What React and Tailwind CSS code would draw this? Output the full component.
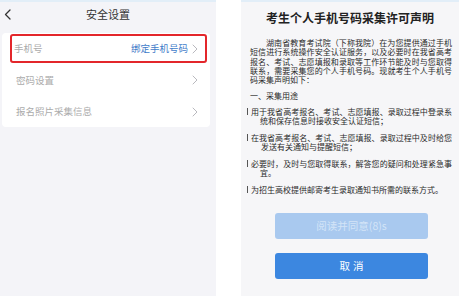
import React from "react";

const Chevron = () => (
  <svg width="6" height="10" viewBox="0 0 6 10" fill="none">
    <path d="M1 1l4 4-4 4" stroke="#b9b9be" strokeWidth="1" strokeLinecap="round" strokeLinejoin="round" />
  </svg>
);

const Bar = () => <span className="inline-block w-[1px] h-[7px] bg-[#555] mr-[3px] ml-[6px] shrink-0" />;

const J = ({ children, cls = "" }) => (
  <div className={"whitespace-nowrap text-justify [text-align-last:justify] " + cls}>{children}</div>
);

export default function App() {
  return (
    <div
      className="flex w-[459px] h-[296px] overflow-hidden bg-white"
      style={{ fontFamily: '"Noto Sans CJK SC", "Noto Sans", sans-serif' }}
    >
      {/* Left panel */}
      <div className="w-[216px] h-full bg-[#f4f4f8] flex flex-col">
        <div className="h-[2px] bg-[#e2eef8]" />
        <div className="h-[24px] flex items-center px-[4px]">
          <svg width="7" height="11" viewBox="0 0 7 11" fill="none" className="shrink-0">
            <path d="M6 1L1.5 5.5 6 10" stroke="#333" strokeWidth="1.3" strokeLinecap="round" strokeLinejoin="round" />
          </svg>
          <div className="flex-1 text-center text-[11px] leading-[14px] text-[#333] pr-[7px]">安全设置</div>
        </div>
        <div className="mt-[7px] ml-[2px] w-[208px] bg-white rounded-[4px] flex flex-col">
          <div className="h-[31px] flex items-center">
            <div className="ml-[8px] w-[197px] h-[29px] border-2 border-[#e3262b] rounded-[3px] flex items-center pl-[2px] pr-[7px]">
              <span className="flex-1 text-[9.5px] text-[#ababab]">手机号</span>
              <span className="text-[9.5px] text-[#3f7cc9] mr-[4px]">绑定手机号码</span>
              <Chevron />
            </div>
          </div>
          <div className="h-[32px] flex items-center pl-[14px] pr-[12px]">
            <span className="flex-1 text-[9.5px] text-[#ababab]">密码设置</span>
            <Chevron />
          </div>
          <div className="h-[31px] flex items-center pl-[14px] pr-[12px]">
            <span className="flex-1 text-[9.5px] text-[#ababab]">报名照片采集信息</span>
            <Chevron />
          </div>
        </div>
      </div>

      {/* Gap */}
      <div className="w-[25px] h-full bg-white" />

      {/* Right panel */}
      <div className="w-[218px] h-full bg-[#f6f6f8] flex flex-col">
        <div className="h-[2px] bg-[#e2eef8]" />
        <div className="mt-[9px] h-[14px] leading-[14px] text-center text-[12px] font-bold text-[#222]">
          考生个人手机号码采集许可声明
        </div>
        <div className="mt-[13px] pl-[9px] pr-[7px] text-[8px] leading-[9.25px] text-[#2a2a2a]">
          <J cls="pl-[16px]">湖南省教育考试院（下称我院）在为您提供通过手机</J>
          <J>短信进行系统操作安全认证服务，以及必要时在我省高考</J>
          <J>报名、考试、志愿填报和录取等工作环节能及时与您取得</J>
          <J>联系，需要采集您的个人手机号码。现就考生个人手机号</J>
          <div>码采集声明如下：</div>
          <div className="mt-[7px]">一、采集用途</div>
        </div>
        <div className="mt-[6px] pr-[7px] text-[8px] leading-[9.5px] text-[#2a2a2a] flex flex-col gap-[7px]">
          <div>
            <div className="flex items-center">
              <Bar />
              <J cls="flex-1">用于我省高考报名、考试、志愿填报、录取过程中登录系</J>
            </div>
            <div className="pl-[19px]">统和保存信息时接收安全认证短信；</div>
          </div>
          <div>
            <div className="flex items-center">
              <Bar />
              <J cls="flex-1">在我省高考报名、考试、志愿填报、录取过程中及时给您</J>
            </div>
            <div className="pl-[20px]">发送有关通知与提醒短信；</div>
          </div>
          <div>
            <div className="flex items-center">
              <Bar />
              <J cls="flex-1">必要时，及时与您取得联系，解答您的疑问和处理紧急事</J>
            </div>
            <div className="pl-[19px]">宜。</div>
          </div>
          <div className="flex items-center">
            <Bar />
            <span>为招生高校提供邮寄考生录取通知书所需的联系方式。</span>
          </div>
        </div>
        <div className="mt-[19px] ml-[34px] w-[153px] h-[26px] rounded-[3px] bg-[#a9c9ef] flex items-center justify-center text-[10.5px] text-[#d3e4f7]">
          阅读并同意(8)s
        </div>
        <div className="mt-[14px] ml-[34px] w-[153px] h-[26px] rounded-[3px] bg-[#3c87e0] flex items-center justify-center pl-[3px] text-[10.5px] text-white tracking-[3px]">
          取消
        </div>
      </div>
    </div>
  );
}
